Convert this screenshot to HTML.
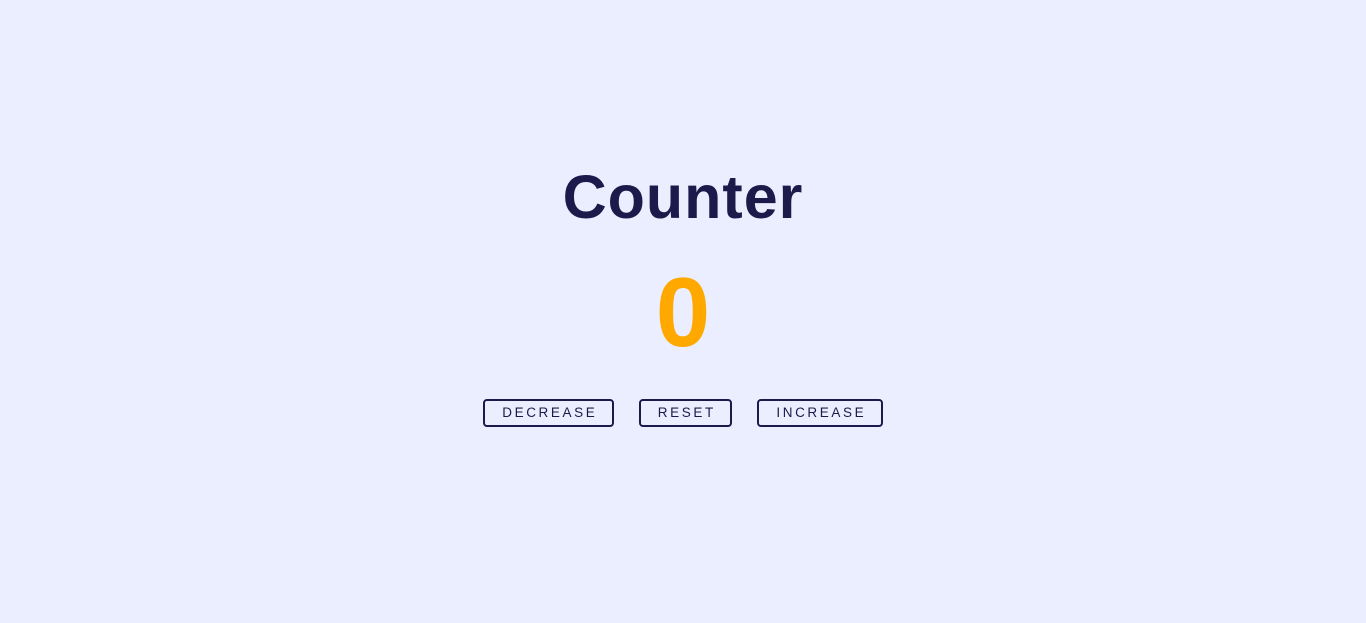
<!DOCTYPE html>
<html><head><style>
html,body{margin:0;padding:0;}
body{width:1366px;height:623px;background:#ebeefe;font-family:"Liberation Sans",Arial,sans-serif;position:relative;overflow:hidden;}
h1{position:absolute;left:0;width:1366px;top:159px;margin:0;text-align:center;font-size:61px;font-weight:bold;color:#1c1a4a;letter-spacing:1px;line-height:76px;}
.num{position:absolute;left:0;width:1366px;top:254px;text-align:center;font-size:98px;font-weight:bold;color:#ffa800;line-height:116px;}
.btn{position:absolute;top:399px;height:28px;box-sizing:border-box;border:2px solid #1c1a4a;border-radius:4px;font-size:13.5px;letter-spacing:2.6px;color:#1c1a4a;text-align:center;line-height:24px;text-indent:2.6px;}
</style></head><body>
<h1>Counter</h1>
<div class="num">0</div>
<div class="btn" style="left:483px;width:131px;">DECREASE</div>
<div class="btn" style="left:639px;width:93px;">RESET</div>
<div class="btn" style="left:757px;width:126px;">INCREASE</div>
</body></html>
